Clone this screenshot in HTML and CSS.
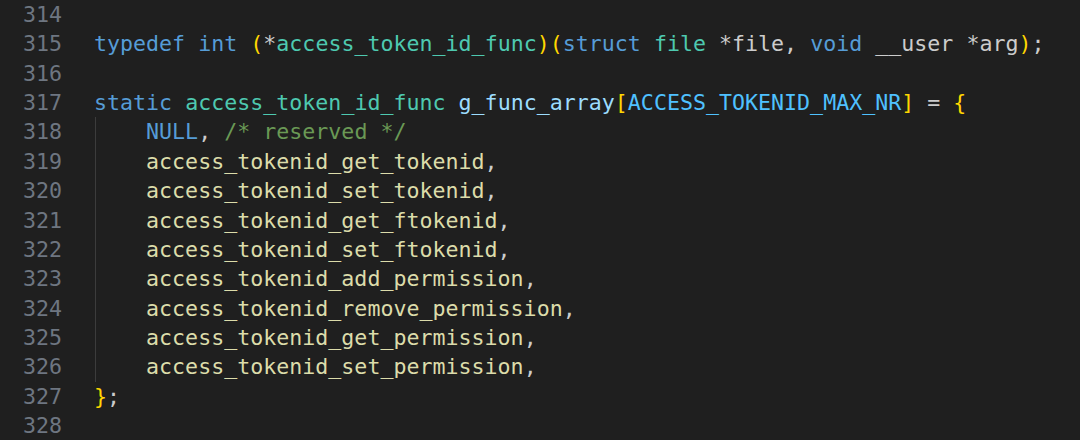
FILE: index.html
```html
<!DOCTYPE html>
<html>
<head>
<meta charset="utf-8">
<link rel="stylesheet" href="styles.css">
</head>
<body>
<div class="editor">
  <div class="gutter">
    <div class="ln">314</div>
    <div class="ln">315</div>
    <div class="ln">316</div>
    <div class="ln">317</div>
    <div class="ln">318</div>
    <div class="ln">319</div>
    <div class="ln">320</div>
    <div class="ln">321</div>
    <div class="ln">322</div>
    <div class="ln">323</div>
    <div class="ln">324</div>
    <div class="ln">325</div>
    <div class="ln">326</div>
    <div class="ln">327</div>
    <div class="ln">328</div>
  </div>
  <div class="code">
    <div class="line"> </div>
    <div class="line"><span class="kw">typedef</span> <span class="kw">int</span> <span class="br">(</span>*<span class="ty">access_token_id_func</span><span class="br">)(</span><span class="kw">struct</span> <span class="ty">file</span> *file, <span class="kw">void</span> __user *arg<span class="br">)</span>;</div>
    <div class="line"> </div>
    <div class="line"><span class="kw">static</span> <span class="ty">access_token_id_func</span> <span class="var">g_func_array</span><span class="br">[</span><span class="mac">ACCESS_TOKENID_MAX_NR</span><span class="br">]</span> = <span class="br">{</span></div>
    <div class="indent">
      <div class="line"><span class="kw">NULL</span>, <span class="cm">/* reserved */</span></div>
      <div class="line"><span class="fn">access_tokenid_get_tokenid</span>,</div>
      <div class="line"><span class="fn">access_tokenid_set_tokenid</span>,</div>
      <div class="line"><span class="fn">access_tokenid_get_ftokenid</span>,</div>
      <div class="line"><span class="fn">access_tokenid_set_ftokenid</span>,</div>
      <div class="line"><span class="fn">access_tokenid_add_permission</span>,</div>
      <div class="line"><span class="fn">access_tokenid_remove_permission</span>,</div>
      <div class="line"><span class="fn">access_tokenid_get_permission</span>,</div>
      <div class="line"><span class="fn">access_tokenid_set_permission</span>,</div>
    </div>
    <div class="line"><span class="br">}</span>;</div>
    <div class="line"> </div>
  </div>
</div>
</body>
</html>
```

FILE: styles.css
```css
html, body {
  margin: 0;
  padding: 0;
  background: #1f1f1f;
  height: 100%;
  overflow: hidden;
}

.editor {
  display: flex;
  font-family: "DejaVu Sans Mono", "Liberation Mono", monospace;
  font-size: 21.64px;
  line-height: 29.36px;
  color: #cccccc;
}

.line, .ln {
  white-space: pre;
  height: 29.36px;
}

.gutter {
  width: 62px;
  text-align: right;
  color: #6e7681;
}

.code {
  margin-left: 32px;
}

.indent {
  border-left: 1px solid #3c3c3c;
  margin-left: 1px;
  padding-left: calc(4ch - 2px);
}

.kw { color: #569cd6; }
.ty { color: #4ec9b0; }
.br { color: #ffd700; }
.var { color: #9cdcfe; }
.mac { color: #4fc1ff; }
.fn { color: #dcdcaa; }
.cm { color: #6a9955; }
```
